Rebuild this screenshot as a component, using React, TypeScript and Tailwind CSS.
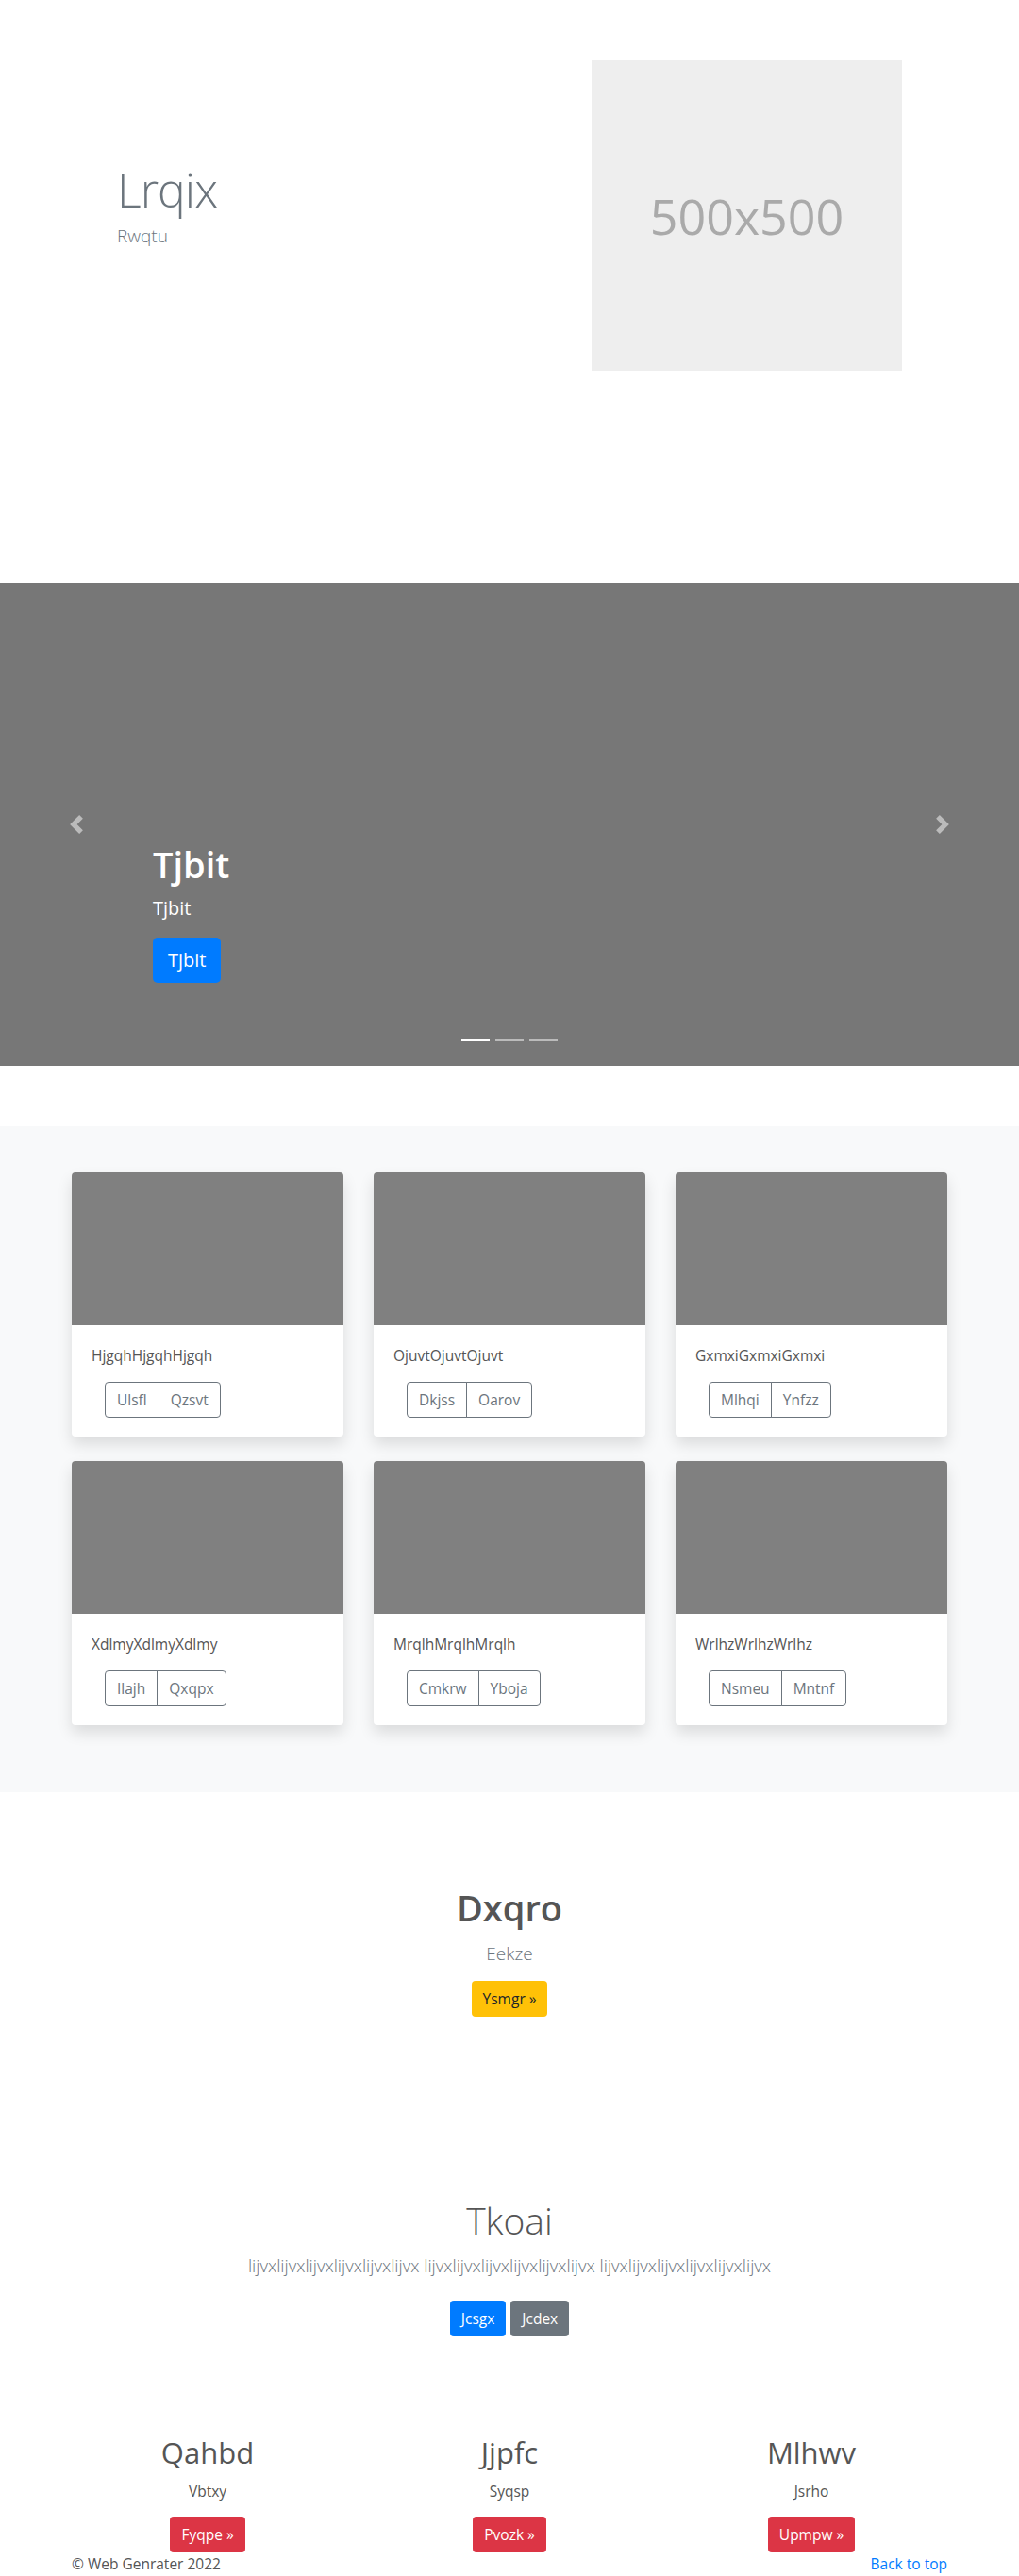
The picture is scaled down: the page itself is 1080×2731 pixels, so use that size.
import React from 'react';

const cards = [
  { text: 'HjgqhHjgqhHjgqh', a: 'Ulsfl', b: 'Qzsvt' },
  { text: 'OjuvtOjuvtOjuvt', a: 'Dkjss', b: 'Oarov' },
  { text: 'GxmxiGxmxiGxmxi', a: 'Mlhqi', b: 'Ynfzz' },
  { text: 'XdlmyXdlmyXdlmy', a: 'Ilajh', b: 'Qxqpx' },
  { text: 'MrqlhMrqlhMrqlh', a: 'Cmkrw', b: 'Yboja' },
  { text: 'WrlhzWrlhzWrlhz', a: 'Nsmeu', b: 'Mntnf' },
];

const columns = [
  { title: 'Qahbd', sub: 'Vbtxy', btn: 'Fyqpe »' },
  { title: 'Jjpfc', sub: 'Syqsp', btn: 'Pvozk »' },
  { title: 'Mlhwv', sub: 'Jsrho', btn: 'Upmpw »' },
];

function Chevron({ dir }: { dir: 'left' | 'right' }) {
  return (
    <svg width="20" height="20" viewBox="0 0 8 8" fill="#fff" className="opacity-50">
      {dir === 'left' ? (
        <path d="M5.25 0l-4 4 4 4 1.5-1.5L4.25 4l2.5-2.5L5.25 0z" />
      ) : (
        <path d="M2.75 0l-1.5 1.5L3.75 4l-2.5 2.5L2.75 8l4-4-4-4z" />
      )}
    </svg>
  );
}

export default function App() {
  return (
    <div className="w-[1080px] bg-white text-[#555] font-['Open_Sans','Noto_Sans',sans-serif]">
      {/* Hero */}
      <section className="h-[537px] flex pt-[64px]">
        <div className="w-[627px] pl-[124px] pt-[107px]">
          <h1 className="text-[50px] leading-[1.2] font-light tracking-[-1px] text-[#6c757d] mb-[4px]">Lrqix</h1>
          <p className="text-[19px] leading-[30px] font-light text-[#6c757d]">Rwqtu</p>
        </div>
        <div className="w-[329px] h-[329px] bg-[#eee] flex items-center justify-center text-[#aaa] text-[52px]">
          500x500
        </div>
      </section>
      <hr className="border-0 border-t border-[#e1e1e1]" />

      {/* Carousel */}
      <section className="relative mt-[80px] h-[512px] bg-[#777] flex flex-col justify-end pl-[162px] pb-[88px] text-white">
        <button className="absolute left-[71px] top-[246px]">
          <Chevron dir="left" />
        </button>
        <button className="absolute left-[989px] top-[246px]">
          <Chevron dir="right" />
        </button>
        <h1 className="text-[38px] leading-[1.2] font-semibold mb-[8px]">Tjbit</h1>
        <p className="text-[20px] leading-[30px] mb-[16px]">Tjbit</p>
        <button className="self-start bg-[#007bff] text-white text-[20px] leading-[30px] px-4 py-[9px] rounded-[5px]">
          Tjbit
        </button>
        <div className="absolute left-1/2 -translate-x-1/2 top-[483px] flex gap-[6px]">
          <span className="w-[30px] h-[3px] bg-white" />
          <span className="w-[30px] h-[3px] bg-white opacity-50" />
          <span className="w-[30px] h-[3px] bg-white opacity-50" />
        </div>
      </section>

      {/* Cards */}
      <section className="mt-[64px] bg-[#f8f9fa] pt-[49px] pb-[71px]">
        <div className="w-[928px] mx-auto grid grid-cols-3 gap-x-8 gap-y-[26px]">
          {cards.map((c) => (
            <div key={c.text} className="bg-white rounded-[4px] overflow-hidden shadow-[0_8px_16px_rgba(0,0,0,0.12)]">
              <div className="h-[162px] bg-[#808080]" />
              <div className="p-[20px] pl-[21px]">
                <p className="text-[15.5px] leading-6 mb-4 text-[#555]">{c.text}</p>
                <div className="inline-flex ml-[14px]">
                  <button className="border border-[#6c757d] text-[#6c757d] text-[15.5px] leading-6 px-3 py-[6px] rounded-l-[4px]">
                    {c.a}
                  </button>
                  <button className="-ml-px border border-[#6c757d] text-[#6c757d] text-[15.5px] leading-6 px-3 py-[6px] rounded-r-[4px]">
                    {c.b}
                  </button>
                </div>
              </div>
            </div>
          ))}
        </div>
      </section>

      {/* Jumbotron */}
      <section className="pt-[100px] text-center">
        <h1 className="text-[38px] leading-[1.2] font-semibold text-[#555] mb-[10px]">Dxqro</h1>
        <p className="text-[19px] leading-[30px] font-light text-[#6c757d] mb-[14px]">Eekze</p>
        <button className="bg-[#ffc107] text-[#212529] text-[15.5px] leading-6 px-3 py-[7px] rounded-[4px]">
          Ysmgr »
        </button>
      </section>

      <section className="pt-[193px] text-center">
        <h1 className="text-[39px] leading-[1.2] font-light text-[#555] mb-[10px]">Tkoai</h1>
        <p className="text-[18.5px] leading-[30px] font-light text-[#6c757d] mb-[22px]">
          lijvxlijvxlijvxlijvxlijvxlijvx lijvxlijvxlijvxlijvxlijvxlijvx lijvxlijvxlijvxlijvxlijvxlijvx
        </p>
        <div className="flex justify-center gap-[5px]">
          <button className="bg-[#007bff] text-white text-[15.5px] leading-6 px-3 py-[7px] rounded-[4px]">Jcsgx</button>
          <button className="bg-[#6c757d] text-white text-[15.5px] leading-6 px-3 py-[7px] rounded-[4px]">Jcdex</button>
        </div>
      </section>

      {/* Columns */}
      <section className="pt-[105px] w-[960px] mx-auto grid grid-cols-3">
        {columns.map((c) => (
          <div key={c.title} className="text-center">
            <h2 className="text-[31px] leading-[1.2] font-medium text-[#555] mb-[9px]">{c.title}</h2>
            <p className="text-[15.5px] leading-6 text-[#555] mb-[15px]">{c.sub}</p>
            <button className="bg-[#dc3545] text-white text-[15.5px] leading-6 px-3 py-[7px] rounded-[4px]">{c.btn}</button>
          </div>
        ))}
      </section>

      {/* Footer */}
      <footer className="w-[928px] mx-auto flex justify-between text-[15.5px] leading-6">
        <p className="text-[#555]">© Web Genrater 2022</p>
        <a href="#" className="text-[#007bff]">Back to top</a>
      </footer>
    </div>
  );
}
